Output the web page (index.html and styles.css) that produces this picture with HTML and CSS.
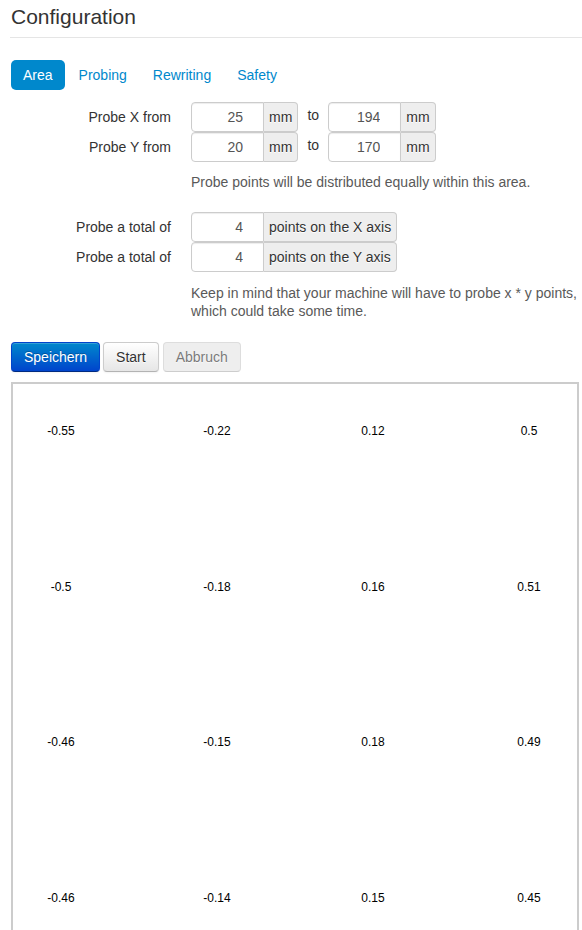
FILE: index.html
```html
<!DOCTYPE html>
<html>
<head>
<meta charset="utf-8">
<link rel="stylesheet" href="styles.css">
</head>
<body>
<div class="page">
  <div class="legend">Configuration</div>
  <ul class="pills">
    <li class="active"><a>Area</a></li>
    <li><a>Probing</a></li>
    <li><a>Rewriting</a></li>
    <li><a>Safety</a></li>
  </ul>

  <div class="form">
    <div class="row">
      <label class="lbl">Probe X from</label>
      <div class="controls">
        <div class="group"><input class="num" value="25"><span class="addon">mm</span></div>
        <span class="to">to</span>
        <div class="group"><input class="num" value="194"><span class="addon">mm</span></div>
      </div>
    </div>
    <div class="row">
      <label class="lbl">Probe Y from</label>
      <div class="controls">
        <div class="group"><input class="num" value="20"><span class="addon">mm</span></div>
        <span class="to">to</span>
        <div class="group"><input class="num" value="170"><span class="addon">mm</span></div>
      </div>
    </div>
    <p class="help first">Probe points will be distributed equally within this area.</p>

    <div class="row">
      <label class="lbl">Probe a total of</label>
      <div class="controls">
        <div class="group"><input class="num" value="4"><span class="addon">points on the X axis</span></div>
      </div>
    </div>
    <div class="row">
      <label class="lbl">Probe a total of</label>
      <div class="controls">
        <div class="group"><input class="num" value="4"><span class="addon">points on the Y axis</span></div>
      </div>
    </div>
    <p class="help last">Keep in mind that your machine will have to probe x * y points, which could take some time.</p>
  </div>

  <div class="buttons">
    <button class="btn primary">Speichern</button>
    <button class="btn">Start</button>
    <button class="btn disabled">Abbruch</button>
  </div>

  <div class="plot">
    <span>-0.55</span><span>-0.22</span><span>0.12</span><span>0.5</span>
    <span>-0.5</span><span>-0.18</span><span>0.16</span><span>0.51</span>
    <span>-0.46</span><span>-0.15</span><span>0.18</span><span>0.49</span>
    <span>-0.46</span><span>-0.14</span><span>0.15</span><span>0.45</span>
  </div>
</div>
</body>
</html>
```

FILE: styles.css
```css
html, body {
  margin: 0;
  padding: 0;
  background: #fff;
}
body {
  font-family: "Liberation Sans", Arial, sans-serif;
  font-size: 14px;
  line-height: 20px;
  color: #333;
  overflow: hidden;
}
.page {
  padding: 0 3px 0 11px;
}
.legend {
  font-size: 21px;
  line-height: 34px;
  padding-bottom: 3px;
  color: #333;
  border-bottom: 1px solid #e5e5e5;
  margin: 0 -3px 22px -1px;
  padding-left: 1px;
}
.pills {
  list-style: none;
  margin: 0 0 12px 0;
  padding: 0;
  display: flex;
  gap: 2px;
}
.pills a {
  display: block;
  padding: 8px 12px;
  line-height: 14px;
  color: #0088cc;
  border-radius: 5px;
}
.pills .active a {
  background: #0088cc;
  color: #fff;
}
.row {
  display: flex;
  align-items: flex-start;
}
.lbl {
  width: 160px;
  flex: none;
  text-align: right;
  padding-top: 5px;
  line-height: 20px;
  margin-right: 20px;
}
.controls {
  display: flex;
  align-items: flex-start;
}
.group {
  display: flex;
}
.num {
  box-sizing: border-box;
  width: 73px;
  height: 30px;
  padding: 4px 20px 4px 6px;
  margin: 0;
  font-family: inherit;
  font-size: 14px;
  color: #555;
  text-align: right;
  border: 1px solid #ccc;
  border-radius: 4px 0 0 4px;
  box-shadow: inset 0 1px 1px rgba(0,0,0,0.075);
  background: #fff;
}
.addon {
  box-sizing: border-box;
  height: 30px;
  padding: 4px 5px;
  line-height: 20px;
  background: #eee;
  border: 1px solid #ccc;
  border-left: 0;
  border-radius: 0 4px 4px 0;
  text-shadow: 0 1px 0 #fff;
}
.to {
  display: block;
  width: 30px;
  text-align: center;
  line-height: 20px;
  padding-top: 3px;
}
.help {
  margin-left: 180px;
  color: #595959;
  line-height: 18px;
}
.help.first {
  margin-top: 11px;
  margin-bottom: 21px;
}
.help.last {
  margin-top: 12px;
  margin-bottom: 22px;
}
.buttons {
  display: flex;
  gap: 3px;
  margin-bottom: 10px;
}
.btn {
  font-family: inherit;
  font-size: 14px;
  line-height: 20px;
  padding: 4px 12px;
  height: 30px;
  margin: 0;
  color: #333;
  text-shadow: 0 1px 1px rgba(255,255,255,0.75);
  background: linear-gradient(#ffffff, #e6e6e6);
  border: 1px solid #cccccc;
  border-bottom-color: #b3b3b3;
  border-radius: 4px;
  box-shadow: inset 0 1px 0 rgba(255,255,255,.2), 0 1px 2px rgba(0,0,0,.05);
}
.btn.primary {
  color: #fff;
  text-shadow: 0 -1px 0 rgba(0,0,0,0.25);
  background: linear-gradient(#0088cc, #0044cc);
  border-color: #0044cc #0044cc #002a80;
}
.btn.disabled {
  background: #e6e6e6;
  opacity: 0.65;
  box-shadow: none;
  margin-left: 1px;
}
.plot {
  box-sizing: border-box;
  width: 568px;
  height: 568px;
  border: 2px solid #ccc;
  padding: 37px 18px 40px;
  display: grid;
  grid-template-columns: repeat(4, 60px);
  grid-template-rows: repeat(4, 20px);
  justify-content: space-between;
  align-content: space-between;
  font-size: 12px;
  color: #000;
}
.plot span {
  text-align: center;
  line-height: 20px;
}
```
